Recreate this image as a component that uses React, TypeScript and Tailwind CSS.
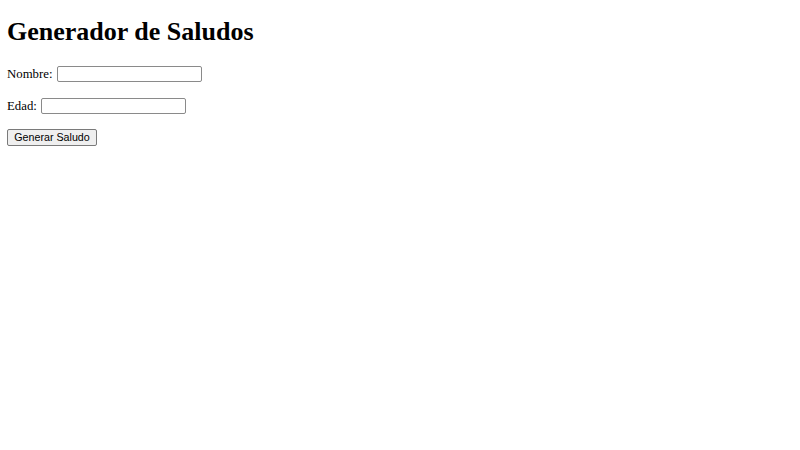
import { useState } from 'react';

export default function App() {
  const [nombre, setNombre] = useState('');
  const [edad, setEdad] = useState('');

  return (
    <div className="min-h-screen bg-white pl-[7px] pt-[18px] font-['Liberation_Serif',serif] text-[12.8px] text-black">
      <h1 className="m-0 text-[26px] font-bold leading-[28px]">Generador de Saludos</h1>

      <div className="mt-[20px] flex h-[16px] items-center gap-[4px]">
        <label htmlFor="nombre" className="leading-[16px]">Nombre:</label>
        <input
          id="nombre"
          type="text"
          value={nombre}
          onChange={(e) => setNombre(e.target.value)}
          className="h-[16px] w-[145px] rounded-[2px] border border-[#8a8a8a] bg-white px-[2px] font-['Liberation_Sans',sans-serif] text-[10.7px] outline-none"
        />
      </div>

      <div className="mt-[16px] flex h-[16px] items-center gap-[4px]">
        <label htmlFor="edad" className="leading-[16px]">Edad:</label>
        <input
          id="edad"
          type="text"
          value={edad}
          onChange={(e) => setEdad(e.target.value)}
          className="h-[16px] w-[145px] rounded-[2px] border border-[#8a8a8a] bg-white px-[2px] font-['Liberation_Sans',sans-serif] text-[10.7px] outline-none"
        />
      </div>

      <button
        type="button"
        className="mt-[15px] flex h-[17px] w-[90px] items-center justify-center rounded-[2px] border border-[#7a7a7a] bg-[#efefef] font-['Liberation_Sans',sans-serif] text-[10.7px] leading-none text-black"
      >
        Generar Saludo
      </button>
    </div>
  );
}
